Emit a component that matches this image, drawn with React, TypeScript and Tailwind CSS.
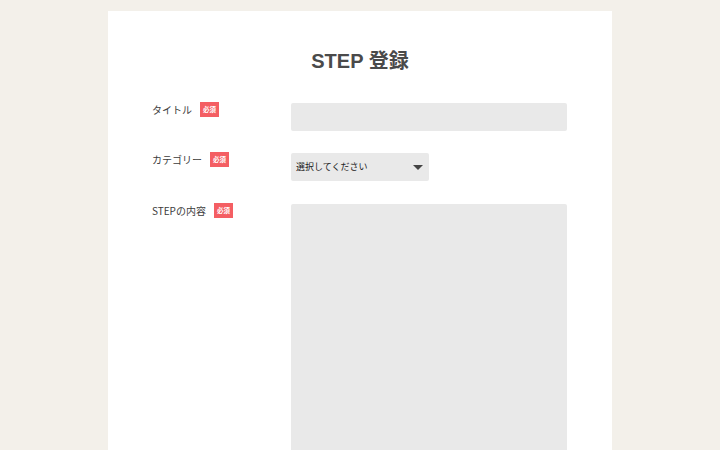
import React from 'react';

const jp = { fontFamily: '"Noto Sans CJK JP", "Noto Sans", sans-serif' };

function Required() {
  return (
    <span className="ml-2 inline-flex h-[15px] w-[19px] items-center justify-center bg-[#f45e63] text-[6.5px] font-bold leading-none text-white">
      必須
    </span>
  );
}

function Label({ text }: { text: string }) {
  return (
    <div className="-mt-px flex h-[15px] w-[139px] shrink-0 items-center text-[10px] text-[#3c3c3c]">
      <span>{text}</span>
      <Required />
    </div>
  );
}

export default function App() {
  return (
    <div className="min-h-[450px] bg-[#f3f0ea] pt-[11px]" style={jp}>
      <div className="mx-auto w-[504px] bg-white px-[44px] pt-[36px] pb-10">
        {/* Title */}
        <h1
          className="mb-[28px] text-center text-[20px] font-bold leading-[28px] text-[#4a4a4a]"
          style={{ fontFamily: '"Liberation Sans", "Noto Sans CJK JP", sans-serif' }}
        >
          STEP 登録
        </h1>

        {/* Form */}
        <div className="flex flex-col">
          <div className="mb-[22px] flex items-start">
            <Label text="タイトル" />
            <div className="h-[28px] w-[276px] rounded-[2px] bg-[#e9e9e9]" />
          </div>

          <div className="mb-[23px] flex items-start">
            <Label text="カテゴリー" />
            <div className="flex h-[28px] w-[138px] items-center justify-between rounded-[2px] bg-[#e9e9e9] pl-[5px] pr-[6px]">
              <span className="text-[9px] text-[#222]">選択してください</span>
              <svg width="10" height="5" viewBox="0 0 10 5">
                <path d="M0 0 H10 L5 5 Z" fill="#444" />
              </svg>
            </div>
          </div>

          <div className="flex items-start">
            <Label text="STEPの内容" />
            <div className="h-[300px] w-[276px] rounded-[2px] bg-[#e9e9e9]" />
          </div>
        </div>
      </div>
    </div>
  );
}
